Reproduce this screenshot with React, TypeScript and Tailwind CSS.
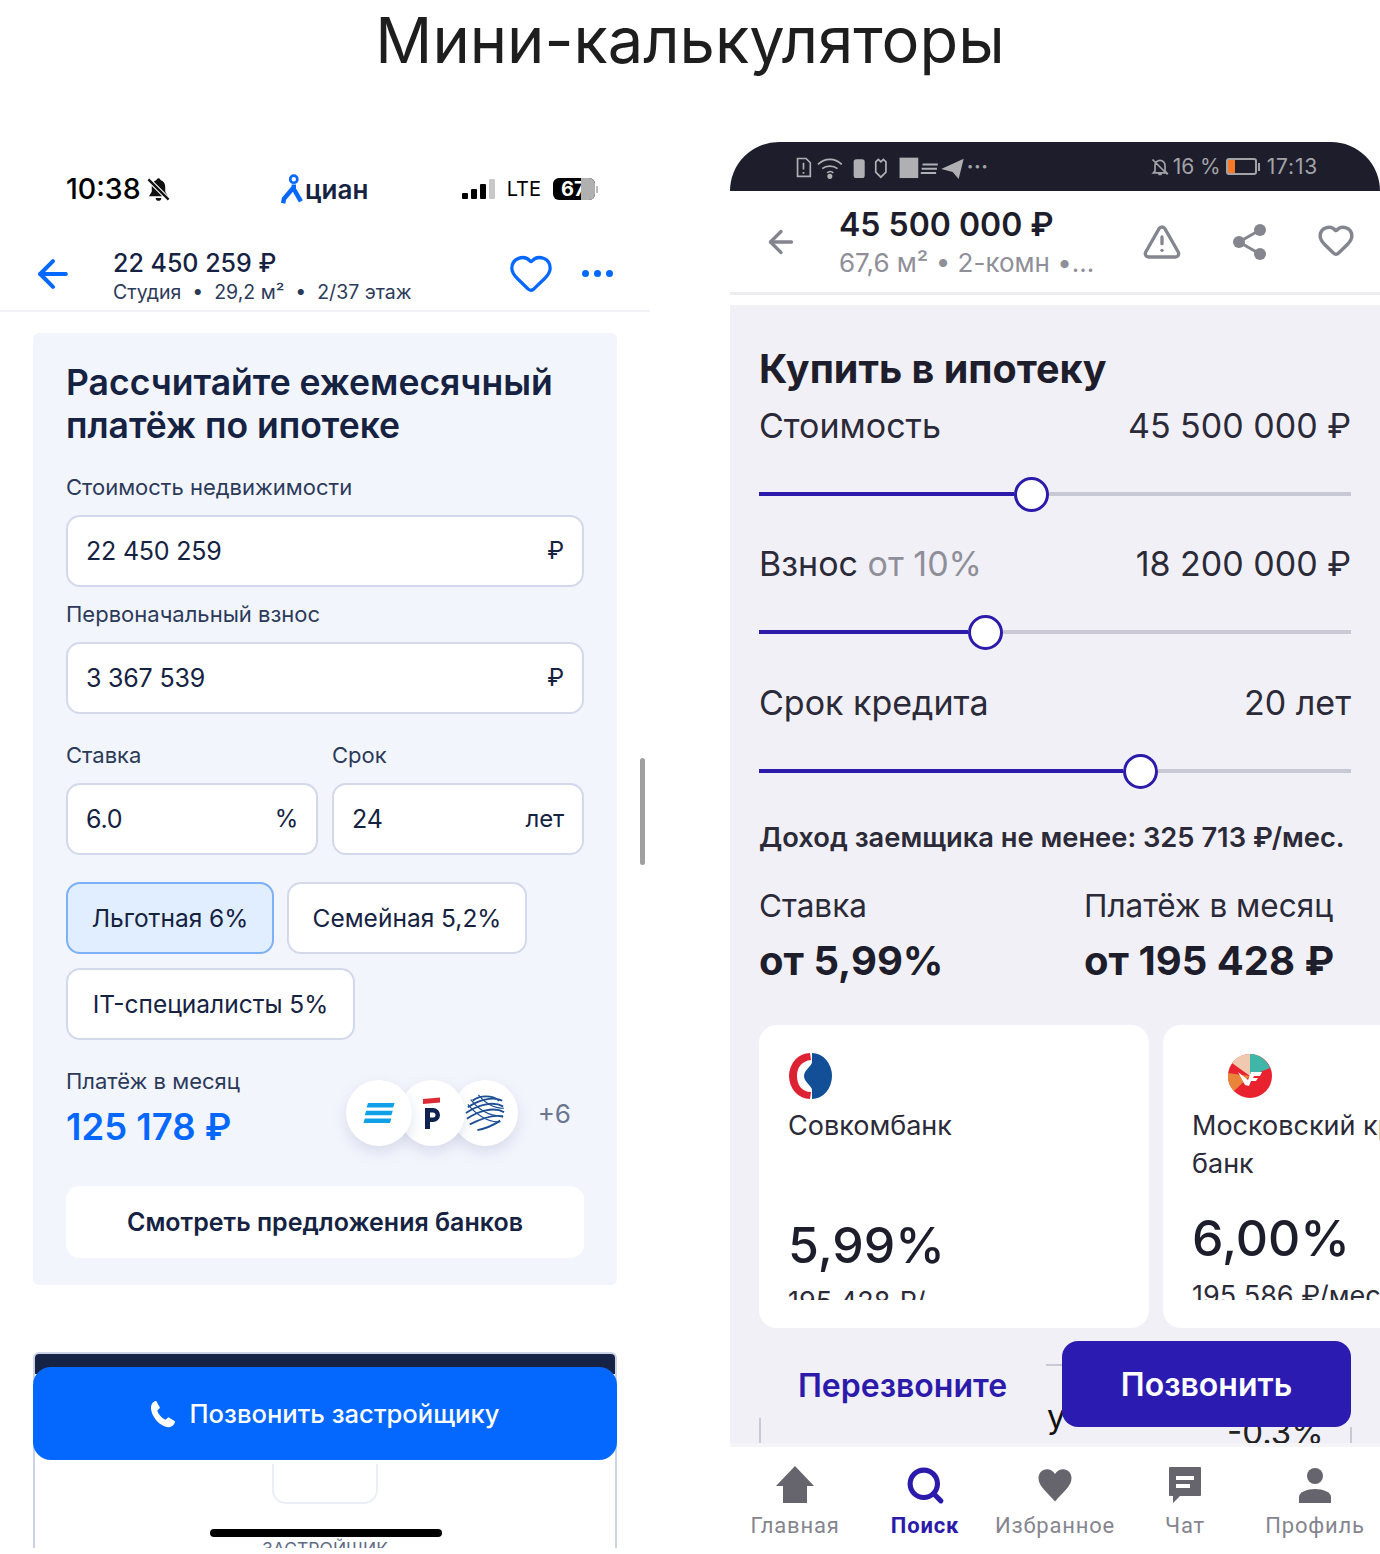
import { ArrowLeft, Heart, Search, TriangleAlert } from 'lucide-react'

const Ring = ({ fill }: { fill: number }) => (
  <div className="flex items-center h-[36px]">
    <div className="h-[4px] bg-[#2c1bab]" style={{ width: fill }} />
    <div className="w-[35px] h-[35px] shrink-0 rounded-full border-[3px] border-[#2c1bab] bg-white" />
    <div className="h-[4px] flex-1 bg-[#c9c9d6]" />
  </div>
)

const Field = ({ value, unit }: { value: string; unit: string }) => (
  <div className="flex items-center justify-between h-[72px] rounded-[14px] border-2 border-[#d3d9ea] bg-white pl-[18px] pr-[18px] text-[25px] tracking-[-0.2px] text-[#152242]">
    <span className="pt-[1px]">{value}</span>
    <span className="text-[24px]">{unit}</span>
  </div>
)

const Chip = ({ label, active, width }: { label: string; active?: boolean; width: string }) => (
  <div
    className={`flex items-center justify-center h-[72px] rounded-[14px] border-2 text-[24.5px] text-[#152242] ${width} ${
      active ? 'bg-[#e1eeff] border-[#7db0f5]' : 'bg-white border-[#d3d9ea]'
    }`}
  >
    {label}
  </div>
)

const Cian = () => (
  <div className="flex flex-col [font-family:Inter,sans-serif]">
    {/* status bar */}
    <div className="flex items-center h-[94px] pl-[66px] pr-[52px]">
      <div className="flex items-center w-[214px] text-[28.500px] font-medium text-black">
        10:38
        <svg width="27" height="27" viewBox="0 0 24 24" className="ml-[4px]">
          <path d="M12 2c-1 0-1.600.7-1.700 1.600C7.600 4.400 6 6.700 6 9.500V14l-2.500 4h17L18 14V9.500C18 6.700 16.400 4.400 13.700 3.600 13.600 2.700 13 2 12 2zM9.500 19.500a2.500 2.500 0 0 0 5 0z" fill="#111" />
          <path d="M3 3l18 18" stroke="#fff" strokeWidth="4" />
          <path d="M3 3l18 18" stroke="#111" strokeWidth="2" />
        </svg>
      </div>
      <div className="flex items-end w-[92px] h-[36px] -mt-[4px]">
        <svg width="24" height="32" viewBox="0 0 24 36" fill="none">
          <circle cx="14" cy="7" r="4" stroke="#0468ff" strokeWidth="3" />
          <path d="M14 13v3L3 29l-1 5M14 18l8 14" stroke="#0468ff" strokeWidth="5" />
        </svg>
        <span className="ml-[1px] text-[26px] leading-[30px] font-semibold text-[#152242]">циан</span>
      </div>
      <div className="flex items-center ml-auto">
        <div className="flex items-end gap-[3px] h-[20px]">
          <div className="w-[6px] h-[6px] rounded-[1px] bg-black" />
          <div className="w-[6px] h-[10px] rounded-[1px] bg-black" />
          <div className="w-[6px] h-[15px] rounded-[1px] bg-black" />
          <div className="w-[6px] h-[20px] rounded-[1px] bg-[#c8c8c8]" />
        </div>
        <span className="ml-[12px] text-[20px] text-black">LTE</span>
        <div className="flex items-center ml-[12px]">
          <div className="relative flex items-center w-[42px] h-[22px] rounded-[6px] overflow-hidden bg-black pl-[8px] text-[20px] leading-none font-bold text-white">
            67
            <div className="absolute right-0 top-0 h-full w-[14px] bg-[#b0b0b0]" />
          </div>
          <div className="w-[2px] h-[7px] ml-[1px] bg-[#bbb]" />
        </div>
      </div>
    </div>

    {/* header */}
    <div className="flex items-center h-[76px] border-b-2 border-[#f0f0f6] pl-[31px] pr-[37px]">
      <ArrowLeft size={44} strokeWidth={2.2} className="text-[#0468ff] mt-[1px]" />
      <div className="ml-[38px] flex flex-col pt-[7px]">
        <span className="text-[25px] leading-[31px] font-medium text-[#152242]">22 450 259 ₽</span>
        <span className="text-[19.500px] leading-[26px] text-[#2c3a5a] whitespace-pre">Студия  •  29,2 м²  •  2/37 этаж</span>
      </div>
      <Heart size={46} strokeWidth={1.7} className="ml-auto text-[#0468ff]" />
      <div className="flex gap-[5px] ml-[28px]">
        <div className="w-[7px] h-[7px] rounded-full bg-[#0468ff]" />
        <div className="w-[7px] h-[7px] rounded-full bg-[#0468ff]" />
        <div className="w-[7px] h-[7px] rounded-full bg-[#0468ff]" />
      </div>
    </div>

    {/* calculator */}
    <div className="mt-[21px] ml-[33px] w-[584px] h-[952px] rounded-[6px] bg-[#f3f5fd] px-[33px] pt-[28px]">
      <h2 className="text-[35.500px] leading-[43px] font-semibold text-[#152242]">
        Рассчитайте ежемесячный
        <br />
        платёж по ипотеке
      </h2>
      <p className="mt-[25px] mb-[13px] text-[22px] leading-[30px] text-[#2c3a5a]">Стоимость недвижимости</p>
      <Field value="22 450 259" unit="₽" />
      <p className="mt-[12px] mb-[13px] text-[22px] leading-[30px] text-[#2c3a5a]">Первоначальный взнос</p>
      <Field value="3 367 539" unit="₽" />
      <div className="mt-[26px] grid grid-cols-2 gap-x-[14px]">
        <div>
          <p className="mb-[13px] text-[22px] leading-[30px] text-[#2c3a5a]">Ставка</p>
          <Field value="6.0" unit="%" />
        </div>
        <div>
          <p className="mb-[13px] text-[22px] leading-[30px] text-[#2c3a5a]">Срок</p>
          <Field value="24" unit="лет" />
        </div>
      </div>
      <div className="mt-[27px] flex flex-wrap gap-x-[13px] gap-y-[14px]">
        <Chip label="Льготная 6%" active width="w-[208px]" />
        <Chip label="Семейная 5,2%" width="w-[240px]" />
        <Chip label="IT-специалисты 5%" width="w-[289px]" />
      </div>
      <div className="mt-[26px] flex items-start justify-between">
        <div>
          <p className="text-[22px] leading-[30px] text-[#2c3a5a]">Платёж в месяц</p>
          <p className="mt-[8px] text-[36.500px] leading-[46px] font-semibold text-[#0468ff]">125 178 ₽</p>
        </div>
        <div className="flex items-center mt-[14px] mr-[13px]">
          <div className="z-30 flex items-center justify-center w-[66px] h-[66px] rounded-full bg-white shadow-[0_6px_14px_rgba(120,130,170,0.22)]">
            <svg width="34" height="22" viewBox="0 0 34 24">
              <path d="M5 1h29l-1.500 5H3.500zM3 9.500h29L30.500 14.500H1.500zM1.500 18h29L29 23H0z" fill="#10a0e8" />
            </svg>
          </div>
          <div className="z-20 -ml-[13px] flex items-center justify-center w-[66px] h-[66px] rounded-full bg-white shadow-[0_6px_14px_rgba(120,130,170,0.22)]">
            <svg width="20" height="34" viewBox="0 0 20 34">
              <path d="M1 3l17-1.500v5L1 8z" fill="#de2a35" />
              <path d="M3 33V12h8a6.500 6.500 0 0 1 0 14H8v7zM8 16.500v5h3a2.500 2.500 0 0 0 0-5z" fill="#0f2350" fillRule="evenodd" />
            </svg>
          </div>
          <div className="z-10 -ml-[13px] flex items-center justify-center w-[66px] h-[66px] rounded-full bg-white shadow-[0_6px_14px_rgba(120,130,170,0.22)]">
            <svg width="40" height="40" viewBox="0 0 42 42" fill="none" stroke="#1d4f95" strokeWidth="2">
              <path d="M8 8c8-6 20-6 28 0M3 15c10-7 26-12 36-7M1 21c12-8 28-13 39-7M2 27c12-8 28-13 39-7M5 33c12-6 26-11 35-8M13 39c10-2 18-6 24-10" />
              <path d="M3 12c8 10 22 20 34 18M6 7c8 10 20 18 34 17M14 2c6 8 16 14 27 14" strokeWidth="1.200" />
            </svg>
          </div>
          <span className="ml-[20px] text-[26px] text-[#6b7690]">+6</span>
        </div>
      </div>
      <div className="mt-[36px] flex items-center justify-center h-[72px] rounded-[14px] bg-white pt-[1px] text-[25px] font-semibold text-[#152242]">
        Смотреть предложения банков
      </div>
    </div>

    {/* peeking block + call button */}
    <div className="relative mt-[67px] ml-[33px] w-[584px] h-[196px] border-x-2 border-t-2 border-[#cdd3e6] rounded-t-[6px] overflow-hidden bg-white">
      <div className="h-[20px] bg-[#172344]" />
      <div className="mx-auto mt-[90px] w-[106px] h-[40px] rounded-b-[14px] border-2 border-t-0 border-[#eceef5]" />
      <p className="absolute left-0 right-0 top-[184px] text-center text-[17.500px] leading-[22px] text-[#5f6b85]">ЗАСТРОЙЩИК</p>
      <div className="absolute left-[175px] top-[175px] w-[232px] h-[8px] rounded-full bg-black" />
    </div>
    <div className="absolute left-[33px] top-[1367px] flex items-center justify-center w-[584px] h-[93px] rounded-[18px] bg-[#0468ff] pt-[1px] pr-[3px] text-[25.600px] font-medium text-white">
      <svg width="30" height="30" viewBox="0 0 24 24" className="mr-[12px]">
        <path d="M6.600 1.500l3 5.500-2.200 2.400c1 3 3.500 5.800 6.600 7.200l2.300-2 5.200 3.200c.3 1.500-1.500 4.500-4.800 4.700C8.500 22 1.500 12 2.500 5.500 3 3 5 1.500 6.600 1.500z" fill="#fff" />
      </svg>
      Позвонить застройщику
    </div>
    <div className="absolute left-[640px] top-[758px] w-[5px] h-[107px] rounded-full bg-[#a0a0a0]" />
  </div>
)

const NavItem = ({ label, active, children }: { label: string; active?: boolean; children: React.ReactNode }) => (
  <div className="flex flex-col items-center w-[130px]">
    <div className="flex items-center justify-center h-[40px]">{children}</div>
    <span
      className={`mt-[8px] text-[22px] leading-[26px] tracking-[0.8px] [font-family:Roboto,sans-serif] ${
        active ? 'font-bold text-[#2c1bab]' : 'text-[#85858f]'
      }`}
    >
      {label}
    </span>
  </div>
)

const BankCard = ({ children, width }: { children: React.ReactNode; width: string }) => (
  <div className={`relative shrink-0 h-[303px] rounded-[18px] bg-white overflow-hidden ${width}`}>{children}</div>
)

const Domclick = () => (
  <div className="relative flex flex-col h-[1406px] overflow-hidden [font-family:Inter,sans-serif]">
    {/* status bar */}
    <div className="flex items-center h-[49px] rounded-t-[50px] bg-[#1e1d2c] pl-[65px] pr-[62px] text-[21px] text-[#a3a3a8]">
      <svg width="170" height="26" viewBox="0 0 200 30" fill="none" stroke="#b0b0b4" strokeWidth="2">
        <path d="M3 5h10l5 5v16H3z" />
        <path d="M10 10v8M10 21v2" />
        <path d="M27 12c8-8 20-8 28 0M32 17c5-4 13-4 18 0M38 22c2-2 5-2 7 0" />
        <circle cx="41" cy="26" r="2" fill="#b0b0b4" />
        <rect x="70" y="7" width="11" height="20" rx="2" fill="#b0b0b4" />
        <path d="M98 6l3 3 3-3 3 3v12l-6 6-6-6V9z" />
        <rect x="124" y="5" width="20" height="22" fill="#b0b0b4" />
        <path d="M150 12h18M149 17h18M148 22h18" strokeWidth="2.500" />
        <path d="M175 17l22-10-5 20-6-7z" fill="#b0b0b4" />
      </svg>
      <span className="ml-[2px] text-[11px] leading-none tracking-[1px]">•••</span>
      <svg width="20" height="22" viewBox="0 0 24 24" fill="none" stroke="#a3a3a8" strokeWidth="2" className="ml-auto">
        <path d="M6 17V10a6 6 0 0 1 12 0v7l2 2H4zM10 21h4M3 3l18 18" />
      </svg>
      <span className="ml-[3px]">16 %</span>
      <div className="flex items-center ml-[5px]">
        <div className="w-[31px] h-[17px] rounded-[3px] border-2 border-[#a3a3a8] flex items-stretch">
          <div className="w-[7px] bg-[#f47a2a]" />
        </div>
        <div className="ml-[1px] w-[2px] h-[8px] bg-[#a3a3a8]" />
      </div>
      <span className="ml-[7px] tracking-[0.8px]">17:13</span>
    </div>

    {/* header */}
    <div className="flex items-center h-[104px] bg-white border-b-[3px] border-[#ececf1] pl-[33px] pr-[25px]">
      <ArrowLeft size={36} strokeWidth={2.2} className="text-[#84848f]" />
      <div className="ml-[40px] flex flex-col pt-[3px]">
        <span className="text-[32px] leading-[40px] font-semibold text-[#1e1d2c]">45 500 000 ₽</span>
        <span className="text-[26px] leading-[36px] text-[#8f8f99]">67,6 м² • 2-комн •...</span>
      </div>
      <TriangleAlert size={40} strokeWidth={2} className="ml-auto mr-[49px] text-[#85858f]" />
      <svg width="38" height="40" viewBox="0 0 38 40" className="mr-[48px]">
        <path d="M29 8L8 20l21 12" fill="none" stroke="#85858f" strokeWidth="3" />
        <circle cx="29" cy="8" r="6" fill="#85858f" />
        <circle cx="8" cy="20" r="6" fill="#85858f" />
        <circle cx="29" cy="32" r="6" fill="#85858f" />
      </svg>
      <Heart size={38} strokeWidth={2.2} className="-mt-[3px] text-[#85858f]" />
    </div>

    {/* content */}
    <div className="h-[10px] bg-white" />
    <div className="flex-1 bg-[#f1f0f6] pt-[40px] px-[29px] text-[#2b2a38]">
      <h2 className="text-[39.500px] leading-[48px] font-bold text-[#1e1d2c]">Купить в ипотеку</h2>
      <div className="mt-[12px] flex items-center justify-between text-[34px] leading-[42px]">
        <span>Стоимость</span>
        <span>45 500 000 ₽</span>
      </div>
      <div className="mt-[29px]"><Ring fill={255} /></div>
      <div className="mt-[31px] flex items-center justify-between text-[34px] leading-[42px]">
        <span>Взнос <span className="text-[#8f8f99]">от 10%</span></span>
        <span>18 200 000 ₽</span>
      </div>
      <div className="mt-[29px]"><Ring fill={209} /></div>
      <div className="mt-[32px] flex items-center justify-between text-[34px] leading-[42px]">
        <span>Срок кредита</span>
        <span>20 лет</span>
      </div>
      <div className="mt-[29px]"><Ring fill={364} /></div>
      <p className="mt-[31px] text-[27.300px] leading-[36px] font-semibold text-[#2b2a38] whitespace-nowrap">Доход заемщика не менее: 325 713 ₽/мес.</p>
      <div className="mt-[30px] grid grid-cols-[325px_1fr]">
        <div>
          <p className="text-[31.500px] leading-[40px]">Ставка</p>
          <p className="mt-[9px] text-[40px] leading-[52px] font-bold text-[#1e1d2c]">от 5,99%</p>
        </div>
        <div>
          <p className="text-[31.500px] leading-[40px]">Платёж в месяц</p>
          <p className="mt-[9px] text-[40px] leading-[52px] font-bold text-[#1e1d2c] whitespace-nowrap">от 195 428 ₽</p>
        </div>
      </div>
      <div className="mt-[38px] flex gap-[14px] w-[650px]">
        <BankCard width="w-[390px]">
          <div className="h-[275px] overflow-hidden px-[29px] pt-[28px]">
            <svg width="44" height="46" viewBox="0 0 44 46">
              <path d="M22 0a21 23 0 0 0 0 46l1-7c-9 0-14-7-14-16S14 8 23 7z" fill="#dd2233" />
              <path d="M24 0a20 23 0 0 1 0 46v-9c0-4-8-8-8-14s8-10 8-14z" fill="#124f96" />
            </svg>
            <p className="mt-[8px] text-[27px] leading-[38px]">Совкомбанк</p>
            <p className="mt-[70px] text-[50px] leading-[60px] font-medium text-[#1e1d2c]">5,99%</p>
            <p className="mt-[10px] text-[27px] leading-[34px]">195 428 ₽/</p>
          </div>
        </BankCard>
        <BankCard width="w-[300px]">
          <div className="h-[275px] overflow-hidden pl-[29px] pt-[28px]">
            <svg width="44" height="46" viewBox="0 0 44 46" className="ml-[36px]">
              <circle cx="22" cy="23" r="22" fill="#e8222f" />
              <path d="M22 23L4 10A22 22 0 0 1 22 1z" fill="#efc9b0" />
              <path d="M22 23V1a22 22 0 0 1 20 14z" fill="#3fb6a8" />
              <path d="M22 23L6 38A22 22 0 0 1 0 20z" fill="#e9843a" />
              <path d="M10 19l10 8 3-8h11l-2 4h-6l-1 2h5l-2 3h-5l-2 5-4-1z" fill="#fff" />
            </svg>
            <p className="mt-[8px] text-[27px] leading-[38px] whitespace-nowrap">Московский кредитный</p>
            <p className="text-[27px] leading-[38px]">банк</p>
            <p className="mt-[25px] text-[50px] leading-[60px] font-medium text-[#1e1d2c]">6,00%</p>
            <p className="mt-[11px] text-[27px] leading-[34px] whitespace-nowrap">195 586 ₽/мес</p>
          </div>
        </BankCard>
      </div>
    </div>

    {/* bottom nav */}
    <div className="flex items-start justify-between h-[105px] border-t-[4px] border-[#f5f5f8] bg-white pt-[18px]">
      <NavItem label="Главная">
        <svg width="40" height="40" viewBox="0 0 40 40"><path d="M20 1l19 20h-7v17H8V21H1z" fill="#66656d" /></svg>
      </NavItem>
      <NavItem label="Поиск" active>
        <Search size={41} strokeWidth={3} className="text-[#2c1bab]" />
      </NavItem>
      <NavItem label="Избранное">
        <svg width="36" height="36" viewBox="0 0 24 24"><path d="M12 23C7 17 1 13 1 7.500 1 4 3.500 1.500 6.500 1.500c2.300 0 4.300 1.200 5.500 3.200 1.200-2 3.200-3.200 5.500-3.200C20.500 1.500 23 4 23 7.500 23 13 17 17 12 23z" fill="#66656d" /></svg>
      </NavItem>
      <NavItem label="Чат">
        <svg width="34" height="40" viewBox="0 0 34 40"><path d="M2 2h30a1 1 0 0 1 1 1v27a1 1 0 0 1-1 1H12l-7 7v-7H2a1 1 0 0 1-1-1V3a1 1 0 0 1 1-1zM8 11v4h18v-4zM8 19v4h14v-4z" fill="#66656d" fillRule="evenodd" /></svg>
      </NavItem>
      <NavItem label="Профиль">
        <svg width="34" height="38" viewBox="0 0 34 38"><circle cx="17" cy="10" r="8" fill="#66656d" /><path d="M1 37v-6c0-5 8-8 16-8s16 3 16 8v6z" fill="#66656d" /></svg>
      </NavItem>
    </div>

    {/* floating actions over the scrolled content */}
    <div className="absolute left-[316px] top-[1222px] w-[16px] h-[2px] bg-[#c9c9d6]" />
    <div className="absolute left-[317px] top-[1254px] text-[33px] leading-[40px] text-[#111]">у</div>
    <div className="absolute left-[29px] top-[1276px] w-[2px] h-[25px] bg-[#c9c9d6]" />
    <div className="absolute left-[620px] top-[1285px] w-[2px] h-[16px] bg-[#c9c9d6]" />
    <div className="absolute left-[497px] top-[1270px] h-[31px] overflow-hidden text-[33px] leading-[40px] text-[#222]">-0.3%</div>
    <div className="absolute left-[68px] top-[1223px] text-[32px] leading-[42px] font-semibold text-[#2c1bab]">Перезвоните</div>
    <div className="absolute left-[332px] top-[1199px] flex items-center justify-center w-[289px] h-[86px] rounded-[16px] bg-[#2c1bb0] pt-[1px] text-[32px] font-semibold text-white">Позвонить</div>
  </div>
)

export default function App() {
  return (
    <div className="relative w-[1380px] h-[1554px] overflow-hidden bg-white [font-family:Inter,sans-serif]">
      <h1 className="h-[142px] text-center text-[63.200px] leading-[81px] font-normal text-[#1e1e1e]">Мини-калькуляторы</h1>
      <div className="flex gap-[80px]">
        <div className="w-[650px]"><Cian /></div>
        <div className="w-[650px]"><Domclick /></div>
      </div>
    </div>
  )
}
